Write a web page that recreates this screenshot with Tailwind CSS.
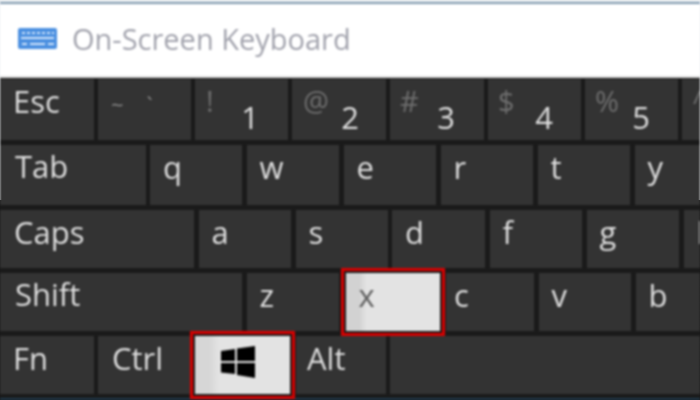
<!DOCTYPE html>
<html lang="en">
<head>
  <meta charset="UTF-8">
  <meta name="viewport" content="width=device-width, initial-scale=1.0">
  <title>On-Screen Keyboard</title>
  <script src="https://cdn.jsdelivr.net/npm/@tailwindcss/browser@4"></script>
</head>
<body class="w-[700px] h-[400px] overflow-hidden bg-linear-to-b from-[#eef1f4] from-50% to-[#1a1a1a] to-50% font-['Open_Sans',sans-serif]">
<div class="w-[700px] h-[400px] overflow-hidden flex flex-col blur-[1px]">
  <!-- title bar -->
  <header class="h-[76px] mt-[2px] shrink-0 bg-white border-t-2 border-[#7f98ad] border-b-2 border-b-[#dddddd] flex items-center pl-[18px] gap-[15px] pb-[3px]">
    <svg width="39" height="21" viewBox="0 0 39 21" class="shrink-0">
      <rect width="39" height="21" rx="2" fill="#4a8fe0"/>
      <g fill="#cfe3fb">
        <rect x="4" y="4" width="3" height="2"/><rect x="9" y="4" width="3" height="2"/><rect x="14" y="4" width="3" height="2"/><rect x="19" y="4" width="3" height="2"/><rect x="24" y="4" width="3" height="2"/><rect x="29" y="4" width="3" height="2"/><rect x="34" y="4" width="2" height="2"/>
        <rect x="3" y="9" width="33" height="2"/>
        <rect x="4" y="15" width="5" height="2"/><rect x="12" y="15" width="15" height="2"/><rect x="30" y="15" width="6" height="2"/>
      </g>
    </svg>
    <span class="text-[29px] leading-none text-[#a2a3ad] whitespace-nowrap">On-Screen Keyboard</span>
  </header>

  <!-- keys -->
  <main class="relative z-10 flex flex-col gap-[5px] pt-px pb-[4px] bg-[#1a1a1a] text-[31px] font-medium leading-none text-[#dedede]">
    <div class="flex gap-[4px] h-[61px]">
      <div class="w-[94px] shrink-0 bg-[#333333] pl-[13px] pt-[7px]">Esc</div>
      <div class="w-[93px] shrink-0 bg-[#333333] pl-[13px] pt-[14px] text-[22px] font-normal text-[#8a8a8a] whitespace-pre">~    `</div>
      <div class="w-[93px] shrink-0 bg-[#333333] pl-[11px] pt-[7px] flex justify-between pr-[29px] text-[29px] font-normal text-[#6e6e6e]">! <span class="self-end pb-[7px] text-[31px] font-medium text-[#dedede]">1</span></div>
      <div class="w-[94px] shrink-0 bg-[#333333] pl-[11px] pt-[7px] flex justify-between pr-[27px] text-[29px] font-normal text-[#6e6e6e]">@ <span class="self-end pb-[7px] text-[31px] font-medium text-[#dedede]">2</span></div>
      <div class="w-[94px] shrink-0 bg-[#333333] pl-[10px] pt-[7px] flex justify-between pr-[29px] text-[29px] font-normal text-[#6e6e6e]"># <span class="self-end pb-[7px] text-[31px] font-medium text-[#dedede]">3</span></div>
      <div class="w-[93px] shrink-0 bg-[#333333] pl-[10px] pt-[7px] flex justify-between pr-[28px] text-[29px] font-normal text-[#6e6e6e]">$ <span class="self-end pb-[7px] text-[31px] font-medium text-[#dedede]">4</span></div>
      <div class="w-[93px] shrink-0 bg-[#333333] pl-[10px] pt-[7px] flex justify-between pr-[28px] text-[29px] font-normal text-[#6e6e6e]">% <span class="self-end pb-[7px] text-[31px] font-medium text-[#dedede]">5</span></div>
      <div class="w-[93px] shrink-0 bg-[#333333] pl-[10px] pt-[7px] text-[29px] font-normal text-[#6e6e6e]">^</div>
    </div>
    <div class="flex gap-[4.5px] h-[60px]">
      <div class="w-[145.5px] shrink-0 bg-[#333333] pl-[15px] pt-[6px]">Tab</div>
      <div class="w-[92px] shrink-0 bg-[#333333] pl-[13px] pt-[7px]">q</div>
      <div class="w-[92.5px] shrink-0 bg-[#333333] pl-[13px] pt-[7px]">w</div>
      <div class="w-[92.5px] shrink-0 bg-[#333333] pl-[13px] pt-[7px]">e</div>
      <div class="w-[92.5px] shrink-0 bg-[#333333] pl-[13px] pt-[7px]">r</div>
      <div class="w-[92.5px] shrink-0 bg-[#333333] pl-[13px] pt-[7px]">t</div>
      <div class="w-[92.5px] shrink-0 bg-[#333333] pl-[13px] pt-[7px]">y</div>
    </div>
    <div class="flex gap-[4.5px] h-[58px]">
      <div class="w-[194px] shrink-0 bg-[#333333] pl-[14px] pt-[7px]">Caps</div>
      <div class="w-[92.5px] shrink-0 bg-[#333333] pl-[13px] pt-[7px]">a</div>
      <div class="w-[92px] shrink-0 bg-[#333333] pl-[13px] pt-[7px]">s</div>
      <div class="w-[93px] shrink-0 bg-[#333333] pl-[13px] pt-[7px]">d</div>
      <div class="w-[92.5px] shrink-0 bg-[#333333] pl-[13px] pt-[7px]">f</div>
      <div class="w-[92.5px] shrink-0 bg-[#333333] pl-[13px] pt-[7px]">g</div>
      <div class="w-[92.5px] shrink-0 bg-[#333333] pl-[13px] pt-[7px]">h</div>
    </div>
    <div class="flex gap-[4.5px] h-[58px]">
      <div class="w-[242px] shrink-0 bg-[#333333] pl-[15px] pt-[6px]">Shift</div>
      <div class="w-[92.5px] shrink-0 bg-[#333333] pl-[13px] pt-[7px]">z</div>
      <div class="w-[94px] shrink-0 ml-[2px] bg-linear-to-r from-[#d2d2d2] from-[14%] to-[#e3e3e3] to-[22%] text-[#5f5f5f] pl-[13px] pt-[7px] shadow-[0_0_0_2px_#1a1a1a,0_0_0_5px_#d80000]">x</div>
      <div class="w-[88px] shrink-0 ml-[2px] bg-[#333333] pl-[8px] pt-[7px]">c</div>
      <div class="w-[92.5px] shrink-0 bg-[#333333] pl-[13px] pt-[7px]">v</div>
      <div class="w-[92.5px] shrink-0 bg-[#333333] pl-[13px] pt-[7px]">b</div>
    </div>
    <div class="flex gap-[4px] h-[58px]">
      <div class="w-[94px] shrink-0 bg-[#333333] pl-[13px] pt-[7px]">Fn</div>
      <div class="w-[93px] shrink-0 bg-[#333333] pl-[14px] pt-[7px]">Ctrl</div>
      <div class="w-[95px] shrink-0 bg-linear-to-r from-[#d6d6d6] from-[15%] to-[#e3e3e3] to-[25%] pl-[26px] pt-[10px] shadow-[0_0_0_2px_#1a1a1a,0_0_0_5px_#d80000]">
        <svg width="34" height="32" viewBox="0 0 34 32">
          <polygon points="0,5 14,3 14,15 0,15" fill="#000"/>
          <polygon points="16,2.5 34,0 34,15 16,15" fill="#000"/>
          <polygon points="0,17 14,17 14,28 0,26.5" fill="#000"/>
          <polygon points="16,17 34,17 34,32 16,29" fill="#000"/>
        </svg>
      </div>
      <div class="w-[90px] shrink-0 ml-[2px] bg-[#333333] pl-[11px] pt-[7px]">Alt</div>
      <div class="w-[310px] shrink-0 bg-[#333333]"></div>
    </div>
  </main>
  <footer class="h-[2px] shrink-0 bg-[#1f3a4d]"></footer>
</div>
</body>
</html>
